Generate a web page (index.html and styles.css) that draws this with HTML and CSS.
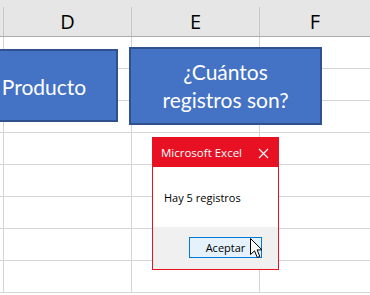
FILE: index.html
```html
<!DOCTYPE html>
<html>
<head>
<meta charset="utf-8">
<link rel="stylesheet" href="styles.css">
</head>
<body>
<div class="sheet">
  <div class="header">
    <div class="hcell c0"></div>
    <div class="hcell">D</div>
    <div class="hcell">E</div>
    <div class="hcell last">F</div>
  </div>
  <div class="rows">
    <div class="row"><div class="cell c0"></div><div class="cell"></div><div class="cell"></div><div class="cell last"></div></div>
    <div class="row"><div class="cell c0"></div><div class="cell"></div><div class="cell"></div><div class="cell last"></div></div>
    <div class="row"><div class="cell c0"></div><div class="cell"></div><div class="cell"></div><div class="cell last"></div></div>
    <div class="row"><div class="cell c0"></div><div class="cell"></div><div class="cell"></div><div class="cell last"></div></div>
    <div class="row"><div class="cell c0"></div><div class="cell"></div><div class="cell"></div><div class="cell last"></div></div>
    <div class="row"><div class="cell c0"></div><div class="cell"></div><div class="cell"></div><div class="cell last"></div></div>
    <div class="row"><div class="cell c0"></div><div class="cell"></div><div class="cell"></div><div class="cell last"></div></div>
    <div class="row"><div class="cell c0"></div><div class="cell"></div><div class="cell"></div><div class="cell last"></div></div>
  </div>

  <div class="shape shape-producto">Producto</div>
  <div class="shape shape-cuantos">¿Cuántos<br>registros son?</div>

  <div class="dialog">
    <div class="titlebar">
      <span class="title">Microsoft Excel</span>
      <svg class="close" width="11" height="11" viewBox="0 0 11 11"><path d="M1 1 L10 10 M10 1 L1 10" stroke="#fff" stroke-width="1.2" fill="none"/></svg>
    </div>
    <div class="dbody">Hay 5 registros</div>
    <div class="dfooter">
      <button class="btn">Aceptar</button>
    </div>
  </div>

  <svg class="cursor" width="13" height="21" viewBox="0 0 13 21"><path d="M0.5 0.5 L0.5 16.5 L4.5 12.8 L7.3 19.5 L9.8 18.4 L7.1 11.9 L12 11.9 Z" fill="#fff" stroke="#000" stroke-width="1" stroke-linejoin="miter"/></svg>
</div>
</body>
</html>
```

FILE: styles.css
```css
* { box-sizing: border-box; }
html, body { margin: 0; padding: 0; }
body { width: 370px; height: 295px; overflow: hidden; background: #fff; }

.sheet { position: relative; width: 370px; height: 295px; overflow: hidden; }

.header {
  display: flex;
  height: 37px;
  padding-top: 7px;
  background: #e6e6e6;
  border-bottom: 1px solid #ababab;
}
.hcell {
  width: 128px;
  flex: none;
  border-right: 1px solid #c6c6c6;
  display: flex;
  align-items: center;
  justify-content: center;
  font-family: "Open Sans", "Noto Sans", sans-serif;
  font-size: 20px;
  color: #000;
  padding-bottom: 1px;
}
.hcell.c0, .cell.c0 { width: 4px; }
.hcell.last, .cell.last { flex: 1; border-right: none; }

.rows { display: flex; flex-direction: column; }
.row { display: flex; height: 32px; flex: none; }
.cell {
  width: 128px;
  flex: none;
  border-right: 1px solid #d4d4d4;
  border-bottom: 1px solid #d4d4d4;
}
.cell.last { border-right: none; }

.shape {
  position: absolute;
  background: #4472c4;
  border: 2px solid #2f528f;
  color: #fff;
  font-family: Lato, "Open Sans", sans-serif;
  font-size: 21px;
  display: flex;
  align-items: center;
  justify-content: center;
  text-align: center;
}
.shape-producto { left: -30px; top: 49px; width: 148px; height: 73px; padding-top: 1px; }
.shape-cuantos { left: 129px; top: 47px; width: 193px; height: 78px; line-height: 28px; }

.dialog {
  position: absolute;
  left: 152px;
  top: 137px;
  width: 127px;
  height: 133px;
  border: 1px solid #e81123;
  display: flex;
  flex-direction: column;
  background: #fff;
  font-family: "Open Sans", "Noto Sans", sans-serif;
}
.titlebar {
  height: 29px;
  background: #e81123;
  display: flex;
  align-items: center;
  justify-content: space-between;
  padding: 0 9px 0 8px;
  color: #fff;
  font-size: 11.5px;
}
.close { display: block; margin-top: 1px; }
.dbody {
  height: 60px;
  display: flex;
  align-items: center;
  padding-left: 11px;
  font-size: 11px;
  color: #000;
  padding-top: 1px;
}
.dfooter {
  flex: 1;
  background: #f0f0f0;
  display: flex;
  justify-content: flex-end;
  align-items: flex-start;
  padding: 10px 16px 0 0;
}
.btn {
  width: 73px;
  height: 21px;
  border: 1px solid #0078d7;
  background: #e5f1fb;
  font-family: "Open Sans", "Noto Sans", sans-serif;
  font-size: 11px;
  color: #000;
  padding: 0;
  margin: 0;
}

.cursor { position: absolute; left: 250px; top: 238px; }
```
